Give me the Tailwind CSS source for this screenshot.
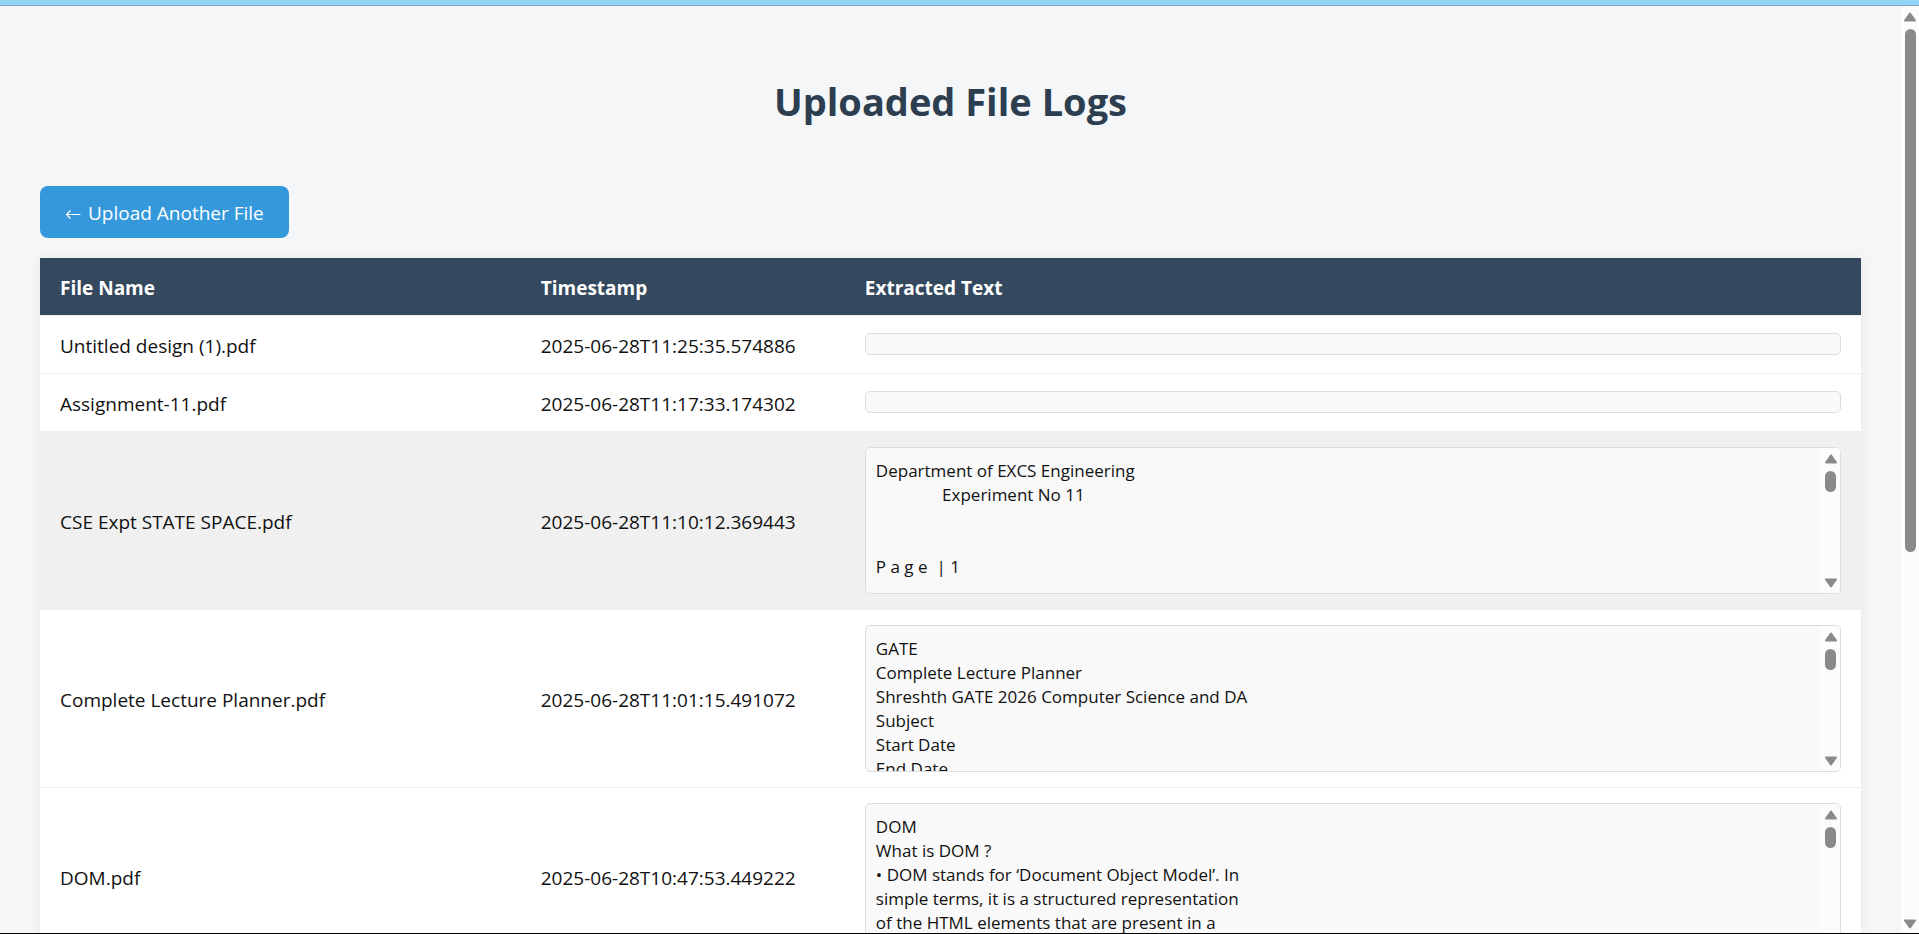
<!DOCTYPE html>
<html lang="en">
<head>
<meta charset="utf-8">
<meta name="viewport" content="width=device-width, initial-scale=1">
<title>Uploaded File Logs</title>
<script src="https://cdn.jsdelivr.net/npm/@tailwindcss/browser@4"></script>
</head>
<body class="flex h-screen flex-col overflow-hidden border-b border-black bg-[#f4f6f8] font-['Segoe_UI','Open_Sans','Noto_Sans',sans-serif] text-[19px] leading-[27px] text-[#111111]">
<svg class="hidden">
  <symbol id="up" viewBox="0 0 14 10"><path d="M7 1.5 12 8.5H2Z" fill="#8a8a8a" stroke="#8a8a8a" stroke-width="2" stroke-linejoin="round"/></symbol>
  <symbol id="down" viewBox="0 0 14 10"><path d="M7 8.5 12 1.5H2Z" fill="#8a8a8a" stroke="#8a8a8a" stroke-width="2" stroke-linejoin="round"/></symbol>
</svg>
<div class="h-1.5 shrink-0 border-b border-[#7ba9c3] bg-[#93d5f5]"></div>
<div class="flex min-h-0 flex-1">
  <main class="min-w-0 flex-1 overflow-hidden px-10 pt-17">
    <h1 class="text-center text-[38px] leading-[54px] font-bold text-[#2c3e50]">Uploaded File Logs</h1>
    <a href="#" class="mt-[58px] inline-flex h-[52px] items-center gap-[7px] rounded-lg bg-[#3498db] px-[25px] pt-0.5 text-white">
      <svg class="h-4 w-4" viewBox="0 0 16 16" fill="none" stroke="currentColor" stroke-width="1.2"><path d="M15.5 9.5H1.5M5.5 5.5l-4 4 4 4"/></svg>
      <span>Upload Another File</span>
    </a>
    <table class="mt-5 w-full table-fixed border-collapse bg-white text-left shadow-[0_0_12px_rgba(0,0,0,0.06)]">
      <colgroup><col class="w-[26.4%]"><col class="w-[17.8%]"><col></colgroup>
      <thead class="bg-[#34495e] text-white">
        <tr class="h-[57px] border-b border-[#eeeeee]">
          <th class="px-5 pt-1 font-bold">File Name</th>
          <th class="px-5 pt-1 font-bold">Timestamp</th>
          <th class="px-5 pt-1 font-bold">Extracted Text</th>
        </tr>
      </thead>
      <tbody>
        <tr class="h-[58px] border-b border-[#eeeeee]">
          <td class="px-5 pt-1">Untitled design (1).pdf</td>
          <td class="px-5 pt-1">2025-06-28T11:25:35.574886</td>
          <td class="px-5"><div class="h-[22px] rounded-[5px] border border-[#dddddd] bg-[#f9f9f9]"></div></td>
        </tr>
        <tr class="h-[58px] border-b border-[#eeeeee]">
          <td class="px-5 pt-1">Assignment-11.pdf</td>
          <td class="px-5 pt-1">2025-06-28T11:17:33.174302</td>
          <td class="px-5"><div class="h-[22px] rounded-[5px] border border-[#dddddd] bg-[#f9f9f9]"></div></td>
        </tr>
        <tr class="border-b border-[#eeeeee] bg-[#f0f0f0]">
          <td class="px-5 pt-1">CSE Expt STATE SPACE.pdf</td>
          <td class="px-5 pt-1">2025-06-28T11:10:12.369443</td>
          <td class="px-5 py-[15px]">
            <div class="flex h-[147px] overflow-hidden rounded-[5px] border border-[#dddddd] bg-[#f9f9f9]">
              <pre class="min-w-0 flex-1 overflow-hidden px-2.5 pt-[11px] font-[inherit] text-[17px] leading-6">Department of EXCS Engineering
               Experiment No 11


P a g e  | 1</pre>
              <div class="flex w-[19px] flex-col items-center bg-[#fcfcfc] pt-1.5 pb-[5px]">
                <svg class="h-2.5 w-3.5"><use href="#up"/></svg>
                <div class="mt-[7px] h-[21px] w-[11px] rounded-full bg-[#8a8a8a]"></div>
                <svg class="mt-auto h-2.5 w-3.5"><use href="#down"/></svg>
              </div>
            </div>
          </td>
        </tr>
        <tr class="border-b border-[#eeeeee]">
          <td class="px-5 pt-1">Complete Lecture Planner.pdf</td>
          <td class="px-5 pt-1">2025-06-28T11:01:15.491072</td>
          <td class="px-5 py-[15px]">
            <div class="flex h-[147px] overflow-hidden rounded-[5px] border border-[#dddddd] bg-[#f9f9f9]">
              <pre class="min-w-0 flex-1 overflow-hidden px-2.5 pt-[11px] font-[inherit] text-[17px] leading-6">GATE
Complete Lecture Planner
Shreshth GATE 2026 Computer Science and DA
Subject
Start Date
End Date</pre>
              <div class="flex w-[19px] flex-col items-center bg-[#fcfcfc] pt-1.5 pb-[5px]">
                <svg class="h-2.5 w-3.5"><use href="#up"/></svg>
                <div class="mt-[7px] h-[21px] w-[11px] rounded-full bg-[#8a8a8a]"></div>
                <svg class="mt-auto h-2.5 w-3.5"><use href="#down"/></svg>
              </div>
            </div>
          </td>
        </tr>
        <tr class="border-b border-[#eeeeee]">
          <td class="px-5 pt-1">DOM.pdf</td>
          <td class="px-5 pt-1">2025-06-28T10:47:53.449222</td>
          <td class="px-5 py-[15px]">
            <div class="flex h-[147px] overflow-hidden rounded-[5px] border border-[#dddddd] bg-[#f9f9f9]">
              <pre class="min-w-0 flex-1 overflow-hidden px-2.5 pt-[11px] font-[inherit] text-[17px] leading-6">DOM
What is DOM ?
• DOM stands for ‘Document Object Model’. In
simple terms, it is a structured representation
of the HTML elements that are present in a</pre>
              <div class="flex w-[19px] flex-col items-center bg-[#fcfcfc] pt-1.5 pb-[5px]">
                <svg class="h-2.5 w-3.5"><use href="#up"/></svg>
                <div class="mt-[7px] h-[21px] w-[11px] rounded-full bg-[#8a8a8a]"></div>
                <svg class="mt-auto h-2.5 w-3.5"><use href="#down"/></svg>
              </div>
            </div>
          </td>
        </tr>
      </tbody>
    </table>
  </main>
  <div class="flex w-[18px] shrink-0 flex-col items-center bg-[#fcfcfc] pt-1.5 pb-1">
    <svg class="h-2.5 w-3.5"><use href="#up"/></svg>
    <div class="mt-[7px] h-[57%] w-[11px] rounded-full bg-[#8a8a8a]"></div>
    <svg class="mt-auto h-2.5 w-3.5"><use href="#down"/></svg>
  </div>
</div>
</body>
</html>
